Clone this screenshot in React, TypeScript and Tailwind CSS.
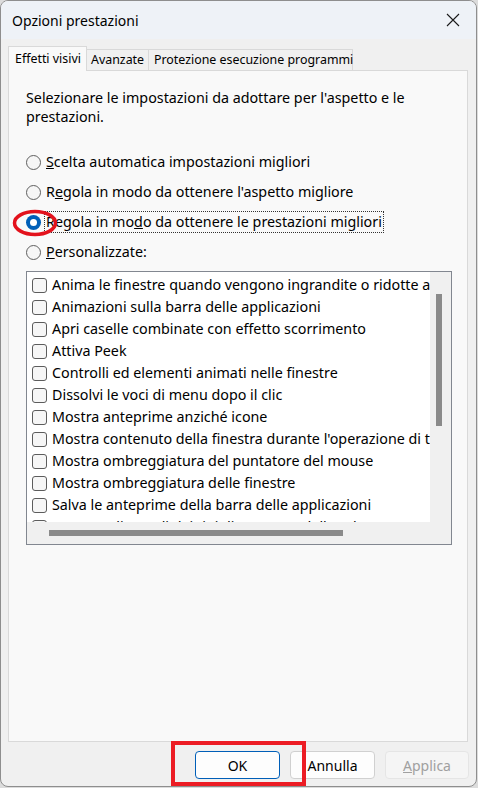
import React from 'react';

const font = { fontFamily: '"Segoe UI", "Noto Sans", sans-serif' };

const items = [
  'Anima le finestre quando vengono ingrandite o ridotte ad icona',
  'Animazioni sulla barra delle applicazioni',
  'Apri caselle combinate con effetto scorrimento',
  'Attiva Peek',
  'Controlli ed elementi animati nelle finestre',
  'Dissolvi le voci di menu dopo il clic',
  'Mostra anteprime anziché icone',
  "Mostra contenuto della finestra durante l'operazione di trascinamento",
  'Mostra ombreggiatura del puntatore del mouse',
  'Mostra ombreggiatura delle finestre',
  'Salva le anteprime della barra delle applicazioni',
  'Smussa gli angoli dei tipi di carattere dello schermo',
];

function Radio({ checked }: { checked?: boolean }) {
  if (checked) {
    return (
      <span className="w-[15px] h-[15px] rounded-full bg-[#005fb8] flex items-center justify-center shrink-0">
        <span className="w-[7px] h-[7px] rounded-full bg-white" />
      </span>
    );
  }
  return <span className="w-[15px] h-[15px] rounded-full border border-[#5f5f5f] bg-[#f6f6f6] shrink-0" />;
}

function RadioRow({ children, checked, focus }: { children: React.ReactNode; checked?: boolean; focus?: boolean }) {
  return (
    <div className="h-[30px] flex items-center gap-[3px]">
      <Radio checked={checked} />
      <span className={focus ? 'border border-dotted border-[#333] px-px leading-[20px]' : 'leading-[20px] px-[2px]'}>{children}</span>
    </div>
  );
}

function Check({ label }: { label: string }) {
  return (
    <div className="h-[22px] flex items-center gap-[5px] pl-[5px] whitespace-nowrap">
      <span className="w-[15px] h-[15px] rounded-[3px] border border-[#5c5c5c] bg-[#f6f6f6] shrink-0" />
      <span>{label}</span>
    </div>
  );
}

export default function App() {
  return (
    <div className="w-[478px] h-[788px] bg-[#dcdcdc] overflow-hidden text-[14.3px] text-black" style={font}>
      <div className="relative w-[477px] h-[787px] rounded-lg border border-[#8e8e8e] bg-[#f0f0f0] flex flex-col overflow-hidden">
        {/* title bar */}
        <div className="h-[38px] bg-[#eef2f7] flex items-center justify-between pl-[11px] pr-[14px] shrink-0">
          <span className="text-[14px]">Opzioni prestazioni</span>
          <svg width="14" height="14" viewBox="0 0 14 14" className="mr-[2px]">
            <path d="M1 1 L13 13 M13 1 L1 13" stroke="#1a1a1a" strokeWidth="1.1" />
          </svg>
        </div>

        {/* tabs */}
        <div className="flex items-end h-[31px] px-[7px] text-[12.4px] whitespace-nowrap shrink-0">
          <div className="h-[25px] px-[6px] flex items-center bg-[#f9f9f9] border border-b-0 border-[#d9d9d9] -mb-px relative z-10 w-[79px]">
            Effetti visivi
          </div>
          <div className="h-[21px] flex items-center px-[4px] border border-l-0 border-b-0 border-[#d9d9d9] w-[62px]">
            Avanzate
          </div>
          <div className="h-[21px] flex items-center px-[5px] border border-l-0 border-b-0 border-[#d9d9d9] w-[204px]">
            Protezione esecuzione programmi
          </div>
        </div>

        {/* tab panel */}
        <div className="mx-[7px] w-[460px] h-[672px] border border-[#d9d9d9] bg-[#f9f9f9] pl-[17px] pt-[17px] shrink-0">
          <p className="leading-[19px] w-[420px]">
            Selezionare le impostazioni da adottare per l'aspetto e le prestazioni.
          </p>

          <div className="mt-[21px]">
            <RadioRow>
              <span className="underline">S</span>celta automatica impostazioni migliori
            </RadioRow>
            <RadioRow>
              R<span className="underline">e</span>gola in modo da ottenere l'aspetto migliore
            </RadioRow>
            <RadioRow checked focus>
              Regola in mo<span className="underline">d</span>o da ottenere le prestazioni migliori
            </RadioRow>
            <RadioRow>
              <span className="underline">P</span>ersonalizzate:
            </RadioRow>
          </div>

          {/* list box */}
          <div className="mt-[4px] w-[426px] h-[274px] border border-[#828790] bg-[#f0f0f0] grid grid-cols-[403px_21px] grid-rows-[250px_22px]">
            <div className="bg-white overflow-hidden pt-[2px]">
              {items.map((t) => (
                <Check key={t} label={t} />
              ))}
            </div>
            <div className="relative">
              <div className="absolute left-[6px] top-[22px] w-[6px] h-[132px] bg-[#8a8a8a]" />
            </div>
            <div className="relative">
              <div className="absolute left-[22px] top-[8px] h-[6px] w-[294px] bg-[#8a8a8a]" />
            </div>
            <div />
          </div>
        </div>

        {/* buttons */}
        <div className="flex justify-end gap-[10px] pr-[7px] pt-[9px] text-[14px]">
          <button className="w-[85px] h-[28px] rounded-[4px] bg-[#fdfdfd] border border-[#005fb8]">OK</button>
          <button className="w-[85px] h-[28px] rounded-[4px] bg-[#fdfdfd] border border-[#d0d0d0]">Annulla</button>
          <button className="w-[84px] h-[28px] rounded-[4px] bg-[#f5f5f5] border border-[#e5e5e5] text-[#a0a0a0]">
            <span className="underline">A</span>pplica
          </button>
        </div>

        {/* annotations */}
        <svg className="absolute left-[11px] top-[206px] pointer-events-none" width="48" height="32" viewBox="0 0 48 32">
          <ellipse cx="23" cy="16" rx="20.5" ry="11.5" fill="none" stroke="#e3121c" strokeWidth="3.5" />
        </svg>
        <div className="absolute left-[170px] top-[740px] w-[135px] h-[45px] border-[4px] border-[#ec1c24] pointer-events-none" />
      </div>
    </div>
  );
}
